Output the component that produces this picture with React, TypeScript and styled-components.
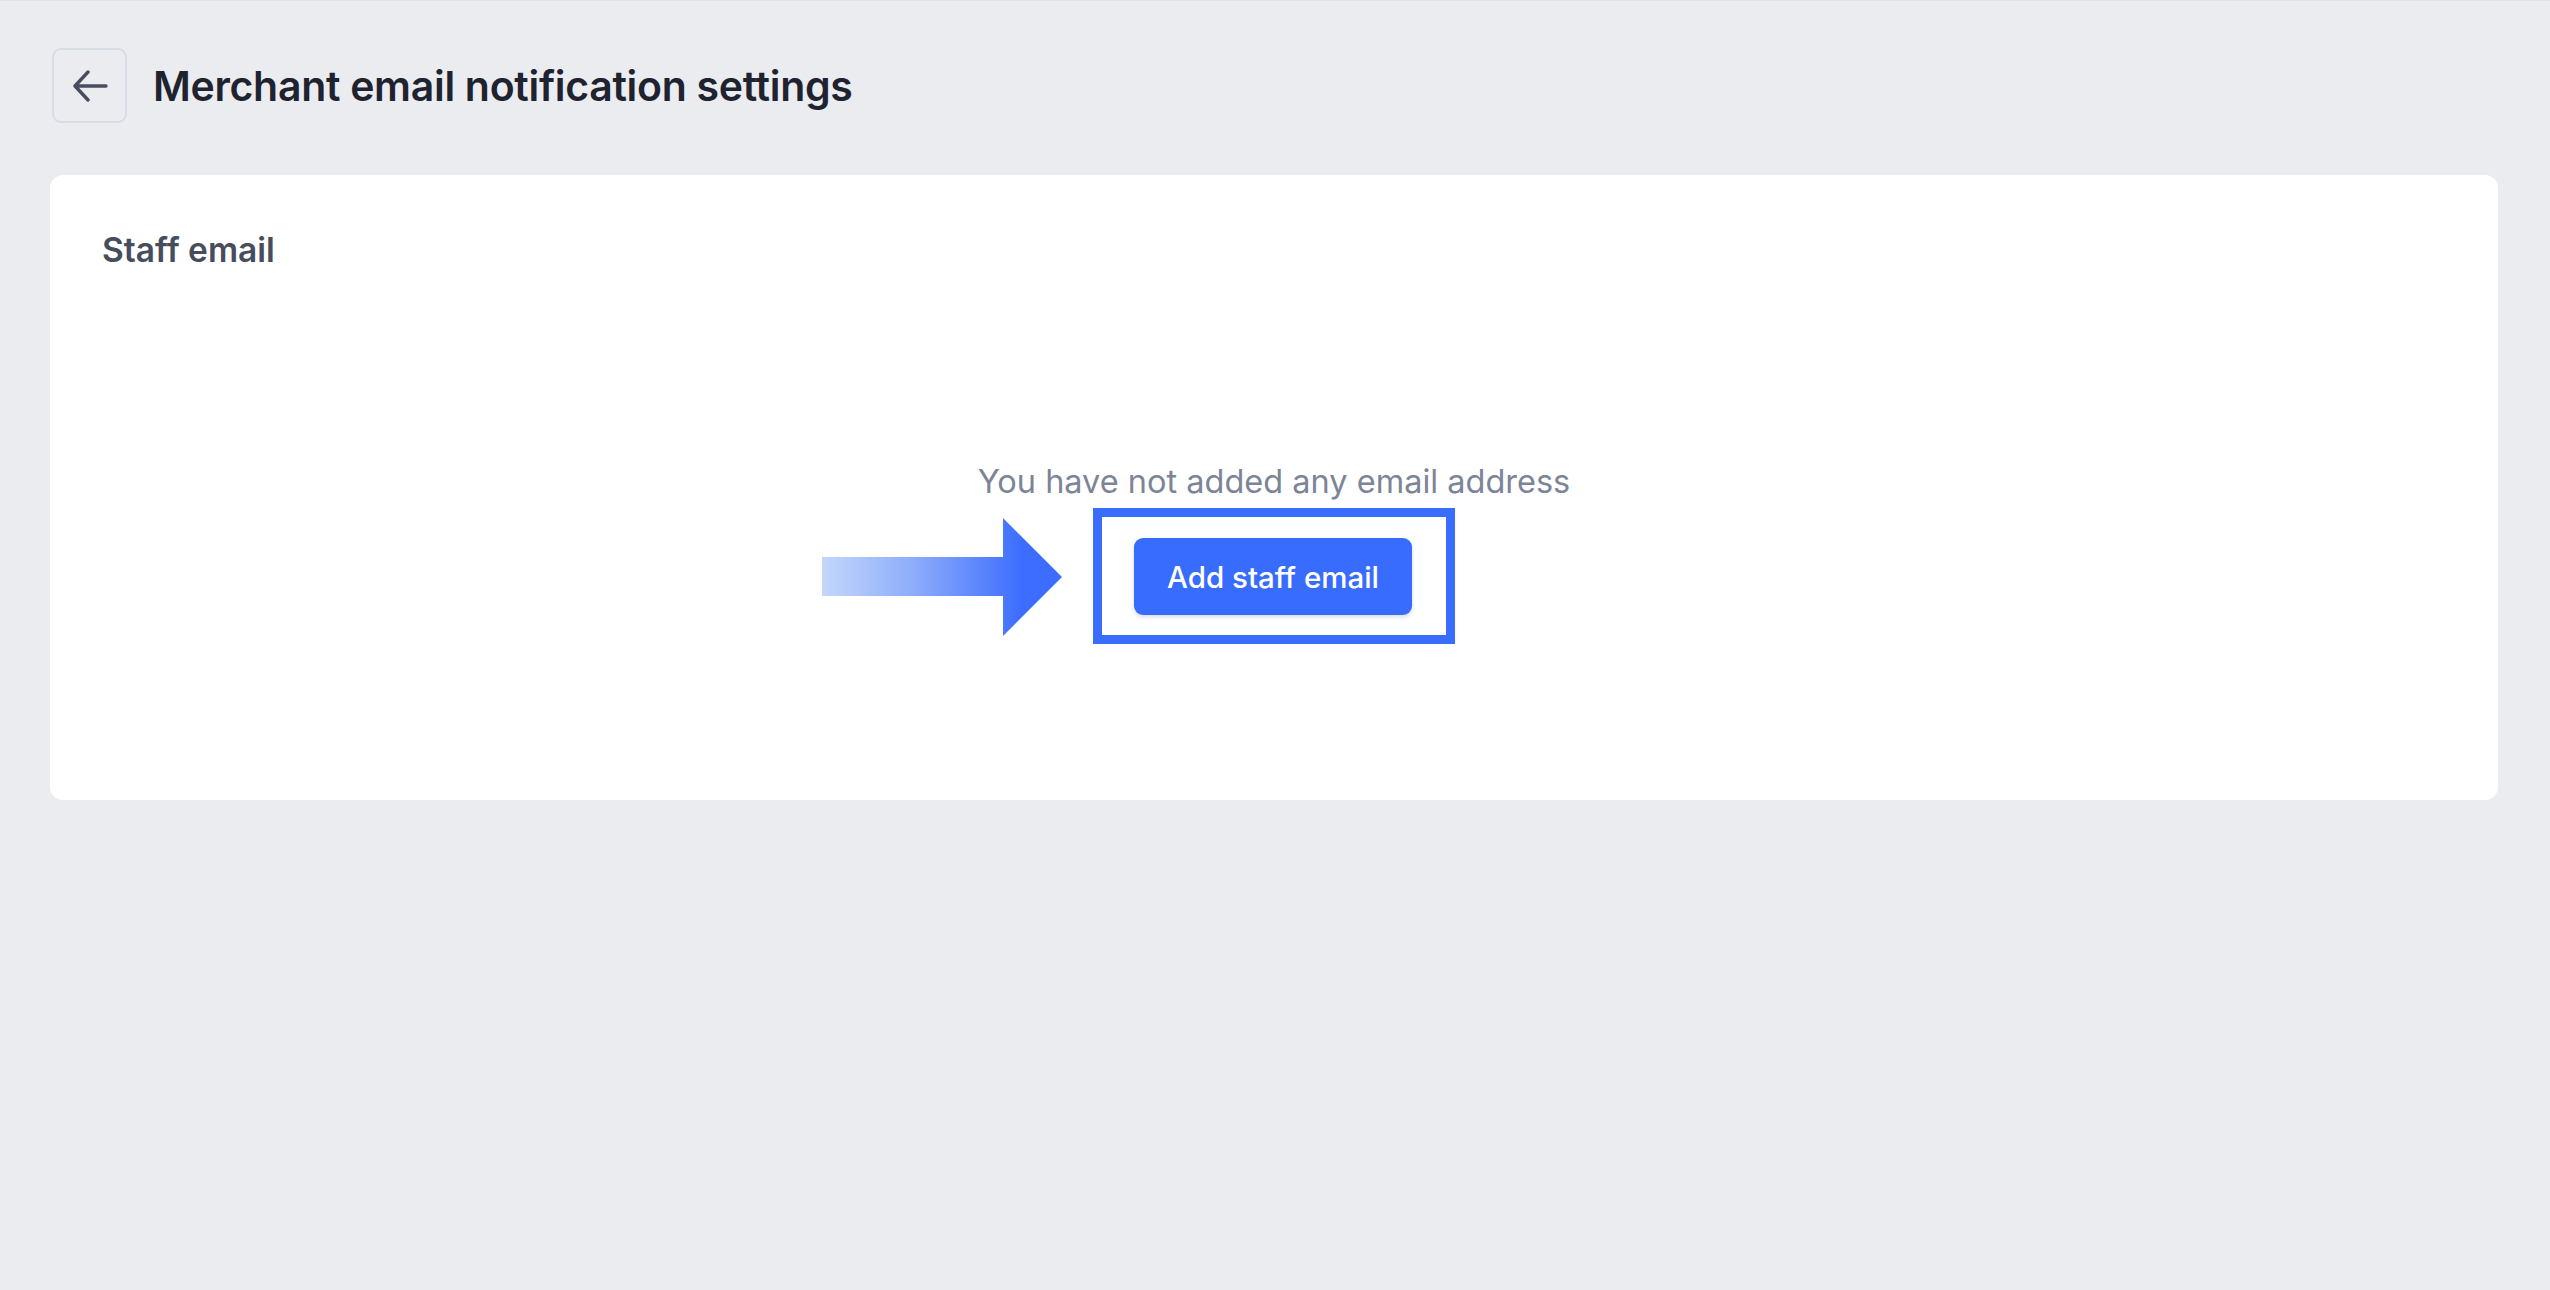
import React from "react";
import styled, { createGlobalStyle } from "styled-components";

const GlobalStyle = createGlobalStyle`
  html, body {
    margin: 0;
    padding: 0;
    background: #ebecf0;
    font-family: Inter, "Noto Sans", "Liberation Sans", sans-serif;
  }
  * {
    box-sizing: border-box;
  }
`;

const Page = styled.div`
  min-height: 1290px;
  padding: 47px 52px 0 50px;
  border-top: 1px solid #e2e4e9;
`;

const Header = styled.header`
  display: flex;
  align-items: center;
  gap: 26px;
  margin-left: 2px;
`;

const BackButton = styled.button`
  width: 75px;
  height: 75px;
  display: flex;
  align-items: center;
  justify-content: center;
  background: transparent;
  border: 2px solid #d8dce7;
  border-radius: 9px;
  padding: 0;
  cursor: pointer;
`;

const PageTitle = styled.h1`
  margin: 0;
  font-size: 41px;
  line-height: 48px;
  font-weight: 600;
  color: #1f2330;
  letter-spacing: -0.3px;
`;

const Card = styled.section`
  margin-top: 52px;
  background: #fff;
  border-radius: 13px;
  padding: 55px 52px 0;
`;

const CardTitle = styled.h2`
  margin: 0;
  font-size: 33.5px;
  line-height: 40px;
  font-weight: 600;
  color: #474d5c;
`;

const EmptyState = styled.div`
  display: flex;
  flex-direction: column;
  align-items: center;
  padding: 192px 0 156px;
`;

const Message = styled.p`
  margin: 0 0 6px;
  font-size: 32.5px;
  line-height: 40px;
  color: #7c8498;
`;

const Highlight = styled.div`
  position: relative;
  border: 9px solid #396dfe;
  padding: 21px 34px 20px 32px;
`;

const Pointer = styled.svg`
  position: absolute;
  right: calc(100% + 40px);
  top: 1px;
`;

const PrimaryButton = styled.button`
  display: block;
  width: 278px;
  height: 77px;
  border: none;
  border-radius: 9px;
  background: #386cfe;
  color: #fff;
  font-family: inherit;
  font-size: 29.5px;
  font-weight: 500;
  box-shadow: 0 2px 4px rgba(30, 50, 110, 0.18);
  cursor: pointer;
`;

function ArrowLeftIcon() {
  return (
    <svg width="36" height="32" viewBox="0 0 36 32" fill="none">
      <path
        d="M16 2 L3 16 L16 30 M3 16 H34"
        stroke="#474d5e"
        strokeWidth="3.4"
        strokeLinecap="round"
        strokeLinejoin="round"
      />
    </svg>
  );
}

function BigArrow() {
  return (
    <Pointer width="240" height="118" viewBox="0 0 240 118">
      <defs>
        <linearGradient id="arrowFill" x1="0" y1="0" x2="200" y2="0" gradientUnits="userSpaceOnUse">
          <stop offset="0" stopColor="#c3d7fc" />
          <stop offset="0.45" stopColor="#8eadfb" />
          <stop offset="1" stopColor="#3c6dfe" />
        </linearGradient>
      </defs>
      <path d="M0 39 H181 V0 L240 59 L181 118 V78 H0 Z" fill="url(#arrowFill)" />
    </Pointer>
  );
}

export default function App() {
  return (
    <>
      <GlobalStyle />
      <Page>
        <Header>
          <BackButton aria-label="Back">
            <ArrowLeftIcon />
          </BackButton>
          <PageTitle>Merchant email notification settings</PageTitle>
        </Header>
        <Card>
          <CardTitle>Staff email</CardTitle>
          <EmptyState>
            <Message>You have not added any email address</Message>
            <Highlight>
              <BigArrow />
              <PrimaryButton>Add staff email</PrimaryButton>
            </Highlight>
          </EmptyState>
        </Card>
      </Page>
    </>
  );
}
